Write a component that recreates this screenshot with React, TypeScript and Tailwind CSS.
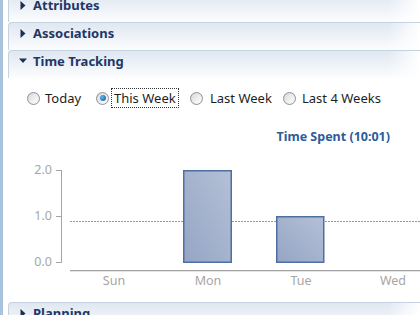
import React from "react";

const font = { fontFamily: "'Noto Sans', 'Open Sans', sans-serif" };

function Tri({ open }: { open?: boolean }) {
  return open ? (
    <svg width="8" height="6" viewBox="0 0 8 6" className="block">
      <path d="M0 0.5 L8 0.5 L4 5 Z" fill="#1b2f57" />
    </svg>
  ) : (
    <svg width="6" height="9" viewBox="0 0 6 9" className="block">
      <path d="M0.5 0 L5.5 4.5 L0.5 9 Z" fill="#1b2f57" />
    </svg>
  );
}

function Header({ title, open, extra }: { title: string; open?: boolean; extra?: string }) {
  return (
    <div
      className={
        "ml-[5px] h-[28px] shrink-0 border-t border-l border-[#c4d2e1] rounded-tl-[4px] flex items-start pt-[1px] bg-[linear-gradient(to_right,rgba(255,255,255,0)_92%,#ffffff),linear-gradient(to_bottom,#dfe7f1,#fcfdfe)] " +
        (extra ?? "")
      }
    >
      <div className={"flex items-center justify-center w-[24px] h-[18px] " + (open ? "pl-[3px]" : "pl-[4px]")}>
        <Tri open={open} />
      </div>
      <span className="text-[13px] leading-[18px] font-bold text-[#1e3766]">{title}</span>
    </div>
  );
}

function Radio({ checked }: { checked?: boolean }) {
  return (
    <span className="relative block w-[13px] h-[13px] rounded-full border border-[#8f9296] bg-[linear-gradient(135deg,#d2d4d6,#fbfbfb)] shrink-0">
      <span className="absolute inset-[1px] rounded-full bg-[linear-gradient(135deg,#dcdcdc,#ffffff)]" />
      {checked && (
        <span className="absolute left-[2.5px] top-[2.5px] w-[6px] h-[6px] rounded-full bg-[radial-gradient(circle_at_35%_35%,#62b6ee,#11548e)]" />
      )}
    </span>
  );
}

export default function App() {
  return (
    <div className="w-[420px] h-[315px] overflow-hidden bg-white flex" style={font}>
      <div className="w-[3px] h-full bg-[#a9c3df] shrink-0" />
      <div className="w-[417px] flex flex-col">
        <Header title="Attributes" extra="-mt-[6px]" />
        <Header title="Associations" />
        <Header title="Time Tracking" open />
        <div className="flex items-center h-[16px] mt-[12px] text-[13px] text-[#1e1e1e] leading-[16px]">
          <div className="flex items-center w-[93px] pl-[24px]">
            <Radio />
            <span className="ml-[5px]">Today</span>
          </div>
          <div className="flex items-center w-[94px]">
            <Radio checked />
            <span className="ml-[4px] px-[1px] outline-1 outline-dotted outline-[#333] outline-offset-[1px]">This Week</span>
          </div>
          <div className="flex items-center w-[93px]">
            <Radio />
            <span className="ml-[7px]">Last Week</span>
          </div>
          <div className="flex items-center">
            <Radio />
            <span className="ml-[6px]">Last 4 Weeks</span>
          </div>
        </div>
        <div className="mt-[24px] h-[14px] flex justify-end pr-[30px] text-[12.5px] leading-[14px] font-bold text-[#2b5c9b]">
          Time Spent (10:01)
        </div>
        <svg width="417" height="158" viewBox="0 0 417 158" className="block shrink-0">
          <defs>
            <linearGradient id="bar" x1="0" y1="1" x2="1" y2="0">
              <stop offset="0" stopColor="#95a5c4" />
              <stop offset="1" stopColor="#b4c0d6" />
            </linearGradient>
          </defs>
          <g fontFamily="'Noto Sans', sans-serif" fontSize="12.5" fill="#a6a6a6">
            <text x="49" y="30" textAnchor="end">2.0</text>
            <text x="49" y="76" textAnchor="end">1.0</text>
            <text x="49" y="122" textAnchor="end">0.0</text>
            <text x="111" y="141" textAnchor="middle">Sun</text>
            <text x="205" y="141" textAnchor="middle">Mon</text>
            <text x="298" y="141" textAnchor="middle">Tue</text>
            <text x="390" y="141" textAnchor="middle">Wed</text>
          </g>
          <g stroke="#a3a3a3" strokeWidth="1" fill="none">
            <path d="M58.5 26 V118.5" />
            <path d="M53 26.5 H58.5 M53 72.5 H58.5 M53 118.5 H58.5" />
            <path d="M67 126.5 H417" />
          </g>
          <path d="M67 127.5 H417" stroke="#e4e4e4" strokeWidth="1" />
          <path d="M67 77.5 H417" stroke="#9a9a9a" strokeWidth="1" strokeDasharray="2 1" />
          <rect x="180.75" y="26.75" width="47.5" height="91.5" fill="url(#bar)" stroke="#4e6fa1" strokeWidth="1.5" />
          <rect x="273.75" y="72.75" width="47" height="45.5" fill="url(#bar)" stroke="#4e6fa1" strokeWidth="1.5" />
        </svg>
        <Header title="Planning" />
      </div>
    </div>
  );
}
